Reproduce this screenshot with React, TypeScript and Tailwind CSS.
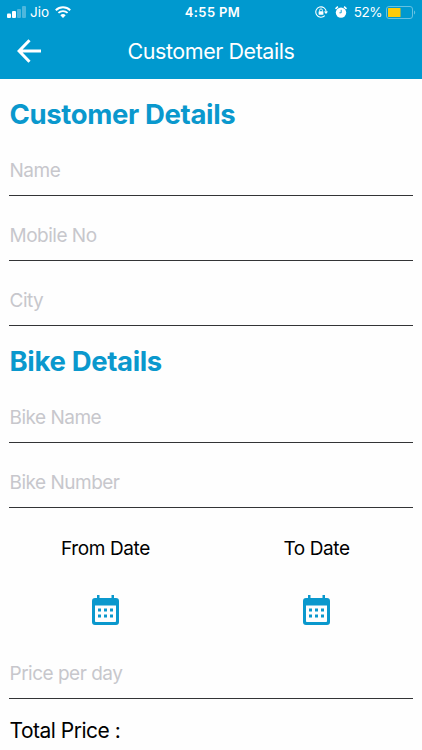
import type { ReactNode } from "react";

const Field = ({ placeholder }: { placeholder: string }) => (
  <div className="flex h-[65px] flex-col justify-end border-b border-[#333436]">
    <input
      type="text"
      placeholder={placeholder}
      className="h-[50px] w-full bg-transparent pl-[0.5px] text-[19px] tracking-[-0.5px] text-black outline-none placeholder:text-[#c7c7cc]"
    />
  </div>
);

const SectionTitle = ({ children }: { children: ReactNode }) => (
  <h2 className="flex h-[52px] items-end pb-[1px] pl-[0.5px] text-[27.5px] leading-[32px] font-bold tracking-[-0.35px] text-[#0a98cd]">
    {children}
  </h2>
);

const CalendarIcon = () => (
  <svg width="27" height="30" viewBox="0 0 27 30" fill="#0a98cd">
    <path
      fillRule="evenodd"
      d="M5 0h2.5v3h12V0H22v3h2a3 3 0 0 1 3 3v21a3 3 0 0 1-3 3H3a3 3 0 0 1-3-3V6a3 3 0 0 1 3-3h2zM3 10.5V26.2c0 .5.3.8.8.8h19.4c.5 0 .8-.3.8-.8V10.5z"
    />
    <path d="M6 13.5h3v3H6zM12 13.5h3v3h-3zM18 13.5h3v3h-3zM6 19.5h3v3H6zM12 19.5h3v3h-3zM18 19.5h3v3h-3z" />
  </svg>
);

const DatePicker = ({ label }: { label: string }) => (
  <div className="flex flex-1 flex-col items-center">
    <span className="mt-[29px] text-[19px] leading-6 tracking-[-0.4px] text-black">{label}</span>
    <button className="mt-[34px]" aria-label={label}>
      <CalendarIcon />
    </button>
  </div>
);

const StatusBar = () => (
  <div className="grid h-[24px] grid-cols-3 items-center text-[13px] leading-4 text-white">
    <div className="flex items-center pl-[7px]">
      <svg width="19" height="12" viewBox="0 0 19 12" fill="currentColor">
        <rect y="7.5" width="4" height="4.5" rx="1" />
        <rect x="5" y="5" width="4" height="7" rx="1" />
        <rect x="10" y="3" width="4" height="9" rx="1" opacity=".3" />
        <rect x="15" width="4" height="12" rx="1" opacity=".3" />
      </svg>
      <span className="ml-[4px] text-[13.5px]">Jio</span>
      <svg className="ml-[6px]" width="16" height="12" viewBox="0 0 16 12" fill="none" stroke="currentColor">
        <path d="M.8 4.2a10.3 10.3 0 0 1 14.4 0" strokeWidth="2" />
        <path d="M3.4 6.9a6.6 6.6 0 0 1 9.2 0" strokeWidth="1.8" />
        <path d="M8 12 5.3 9.2a3.9 3.9 0 0 1 5.4 0z" fill="currentColor" stroke="none" />
      </svg>
    </div>
    <div className="pl-[3px] text-center font-semibold tracking-[0.35px]">4:55 PM</div>
    <div className="flex items-center justify-end pr-[6px]">
      <svg width="13" height="12" viewBox="0 0 13 12" fill="none" stroke="currentColor">
        <path d="M9.8 9.6A5.2 5.2 0 1 1 11.2 6" strokeWidth="1.1" />
        <path d="M8.9 5.4H13l-2 2.7z" fill="currentColor" stroke="none" />
        <rect x="3.6" y="5.2" width="4.8" height="3.6" rx=".5" fill="currentColor" stroke="none" />
        <path d="M4.6 5.4V4.3a1.4 1.4 0 0 1 2.8 0v1.1" strokeWidth=".9" />
      </svg>
      <svg className="ml-[7px]" width="12" height="12" viewBox="0 0 12 12">
        <circle cx="6" cy="6.6" r="5.2" fill="currentColor" />
        <path d="M.5 2.9 2.9.7M11.5 2.9 9.1.7" stroke="currentColor" strokeWidth="1.6" />
        <path d="M6.2 3.8v3H4.4" fill="none" stroke="#0099cf" strokeWidth=".9" />
      </svg>
      <span className="ml-[7px] text-[13.5px] tracking-[-0.5px]">52%</span>
      <svg className="ml-[4px]" width="30" height="13" viewBox="0 0 30 13">
        <rect x=".5" y=".5" width="26" height="12" rx="2.5" fill="none" stroke="#66c2e2" />
        <rect x="2" y="2" width="12.5" height="9" rx=".5" fill="#fecb0a" />
        <path d="M28 4.5c1.6.6 1.6 3.4 0 4z" fill="#66c2e2" />
      </svg>
    </div>
  </div>
);

const Header = () => (
  <header className="h-[79px] bg-[#0099cf]">
    <StatusBar />
    <div className="grid h-[54px] grid-cols-[60px_1fr_60px] items-center text-white">
      <button className="pl-[17px]" aria-label="Back">
        <svg width="24" height="24" viewBox="0 0 24 24" fill="none" stroke="currentColor" strokeWidth="3">
          <path d="M12.5 1.2 2.1 12l10.4 10.8M2 12h22" />
        </svg>
      </button>
      <h1 className="text-center text-[21.5px] leading-7 font-normal tracking-[-0.45px]">Customer Details</h1>
    </div>
  </header>
);

export default function App() {
  return (
    <div className="h-[750px] w-full overflow-hidden bg-[#fefefe] font-['Inter',sans-serif]">
      <Header />
      <main className="pr-[9.4px] pl-[9px]">
        <SectionTitle>Customer Details</SectionTitle>
        <Field placeholder="Name" />
        <Field placeholder="Mobile No" />
        <Field placeholder="City" />
        <SectionTitle>Bike Details</SectionTitle>
        <Field placeholder="Bike Name" />
        <Field placeholder="Bike Number" />
        <div className="-mr-[9.4px] -ml-[9px] flex h-[126px]">
          <DatePicker label="From Date" />
          <DatePicker label="To Date" />
        </div>
        <Field placeholder="Price per day" />
        <p className="mt-[18px] pl-[0.5px] text-[21px] leading-7 tracking-[-0.5px] text-black">Total Price :</p>
      </main>
    </div>
  );
}
